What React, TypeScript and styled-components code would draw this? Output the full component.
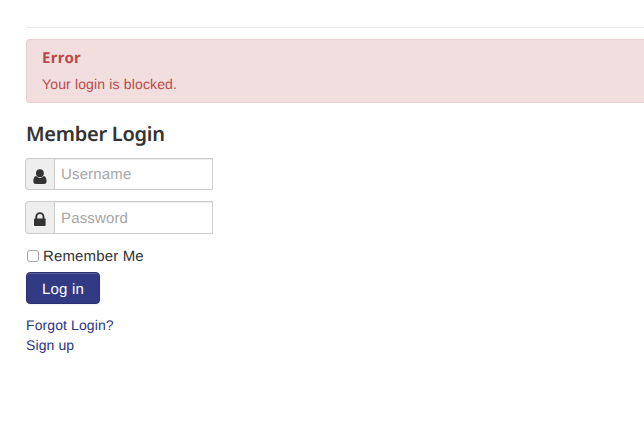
import React from "react";
import styled, { createGlobalStyle } from "styled-components";

const GlobalStyle = createGlobalStyle`
  * { box-sizing: border-box; }
  body {
    margin: 0;
    background: #fff;
    color: #333;
    font-family: "Liberation Sans", Arial, sans-serif;
    overflow: hidden;
    text-rendering: geometricPrecision;
  }
`;

const Page = styled.main`
  padding: 27px 0 0 26px;
`;

const Divider = styled.hr`
  height: 1px;
  margin: 0 0 11px;
  border: 0;
  background: #e9e9e9;
`;

const Alert = styled.section`
  height: 64px;
  padding: 9px 15px 0;
  border: 1px solid #eccdd2;
  border-right: 0;
  border-radius: 4px 0 0 4px;
  background: #f2dede;
  color: #b94a48;
`;

const AlertTitle = styled.h4`
  margin: 0;
  font: 700 15px/18px "Noto Sans", sans-serif;
  letter-spacing: 0.3px;
`;

const AlertText = styled.p`
  margin: 8px 0 0;
  font-size: 14px;
  line-height: 18px;
  letter-spacing: 0.15px;
`;

const Title = styled.h3`
  margin: 17px 0 0;
  font: 600 20px/28px "Noto Sans", sans-serif;
  letter-spacing: -0.25px;
`;

const Form = styled.form`
  display: flex;
  flex-direction: column;
  align-items: flex-start;
`;

const Field = styled.div<{ $height: number; $top: number }>`
  display: flex;
  width: 188px;
  height: ${(p) => p.$height}px;
  margin: ${(p) => p.$top}px 0 0 -1px;
`;

const AddOn = styled.span`
  display: flex;
  width: 29px;
  padding: 5px 0 0 7px;
  align-items: center;
  border: 1px solid #ccc;
  border-right: 0;
  border-radius: 4px 0 0 4px;
  background: #eee;
`;

const Input = styled.input`
  flex: 1;
  min-width: 0;
  padding: 2px 6px 0;
  border: 1px solid #ccc;
  border-radius: 0;
  outline: 0;
  box-shadow: inset 0 1px 1px rgba(0, 0, 0, 0.075);
  font: 15px/20px "Liberation Sans", Arial, sans-serif;
  color: #555;
  letter-spacing: 0.15px;
  text-rendering: geometricPrecision;
  &::placeholder { color: #a6a6a6; opacity: 1; }
`;

const Remember = styled.label`
  display: flex;
  align-items: center;
  height: 20px;
  margin: 12px 0 0 1px;
  gap: 4px;
  font-size: 15px;
  letter-spacing: 0.15px;
`;

const Checkbox = styled.input`
  appearance: none;
  width: 12px;
  height: 12px;
  margin: 0;
  border: 1px solid #a5a5a5;
  border-radius: 3px;
  background: #fff;
  &:checked { background: #313a82; }
`;

const LoginButton = styled.button`
  width: 74px;
  height: 32px;
  margin-top: 6px;
  padding: 3px 0 0;
  border: 1px solid #293073;
  border-radius: 4px;
  background: #313a82;
  box-shadow: inset 0 1px 0 rgba(255, 255, 255, 0.2), 0 1px 2px rgba(0, 0, 0, 0.05);
  color: #fff;
  font: 15px/20px "Liberation Sans", Arial, sans-serif;
  letter-spacing: 0.15px;
  text-rendering: geometricPrecision;
`;

const Links = styled.nav`
  display: flex;
  flex-direction: column;
  align-items: flex-start;
  margin-top: 11px;
`;

const Link = styled.a`
  color: #2b357f;
  font-size: 14px;
  line-height: 20px;
  letter-spacing: 0.1px;
  text-decoration: none;
`;

const UserIcon = () => (
  <svg width="14" height="16" viewBox="0 0 14 16" fill="#333">
    <circle cx="6.9" cy="4.2" r="3.9" />
    <path d="M3.2 7C1.2 7.4.3 9.6.3 12.3c0 1.7.9 2.8 2.4 2.8h8.5c1.5 0 2.4-1.1 2.4-2.8 0-2.7-.9-4.9-2.9-5.3C9.7 8.2 8.5 8.8 6.95 8.8S4.2 8.2 3.2 7Z" />
  </svg>
);

const LockIcon = () => (
  <svg width="14" height="16" viewBox="0 0 14 16" fill="none">
    <path d="M3.3 7.5V4.7a3.6 3.6 0 0 1 7.2 0v2.8" stroke="#333" strokeWidth="1.9" />
    <rect x="1" y="6.4" width="11.6" height="7.6" rx="0.9" fill="#333" />
  </svg>
);

export default function App() {
  return (
    <>
      <GlobalStyle />
      <Page>
        <Divider />
        <Alert role="alert">
          <AlertTitle>Error</AlertTitle>
          <AlertText>Your login is blocked.</AlertText>
        </Alert>
        <Title>Member Login</Title>
        <Form onSubmit={(e) => e.preventDefault()}>
          <Field $height={32} $top={10}>
            <AddOn><UserIcon /></AddOn>
            <Input placeholder="Username" aria-label="Username" />
          </Field>
          <Field $height={33} $top={11}>
            <AddOn><LockIcon /></AddOn>
            <Input type="password" placeholder="Password" aria-label="Password" />
          </Field>
          <Remember>
            <Checkbox type="checkbox" />
            Remember Me
          </Remember>
          <LoginButton type="submit">Log in</LoginButton>
        </Form>
        <Links>
          <Link href="#forgot">Forgot Login?</Link>
          <Link href="#signup">Sign up</Link>
        </Links>
      </Page>
    </>
  );
}
